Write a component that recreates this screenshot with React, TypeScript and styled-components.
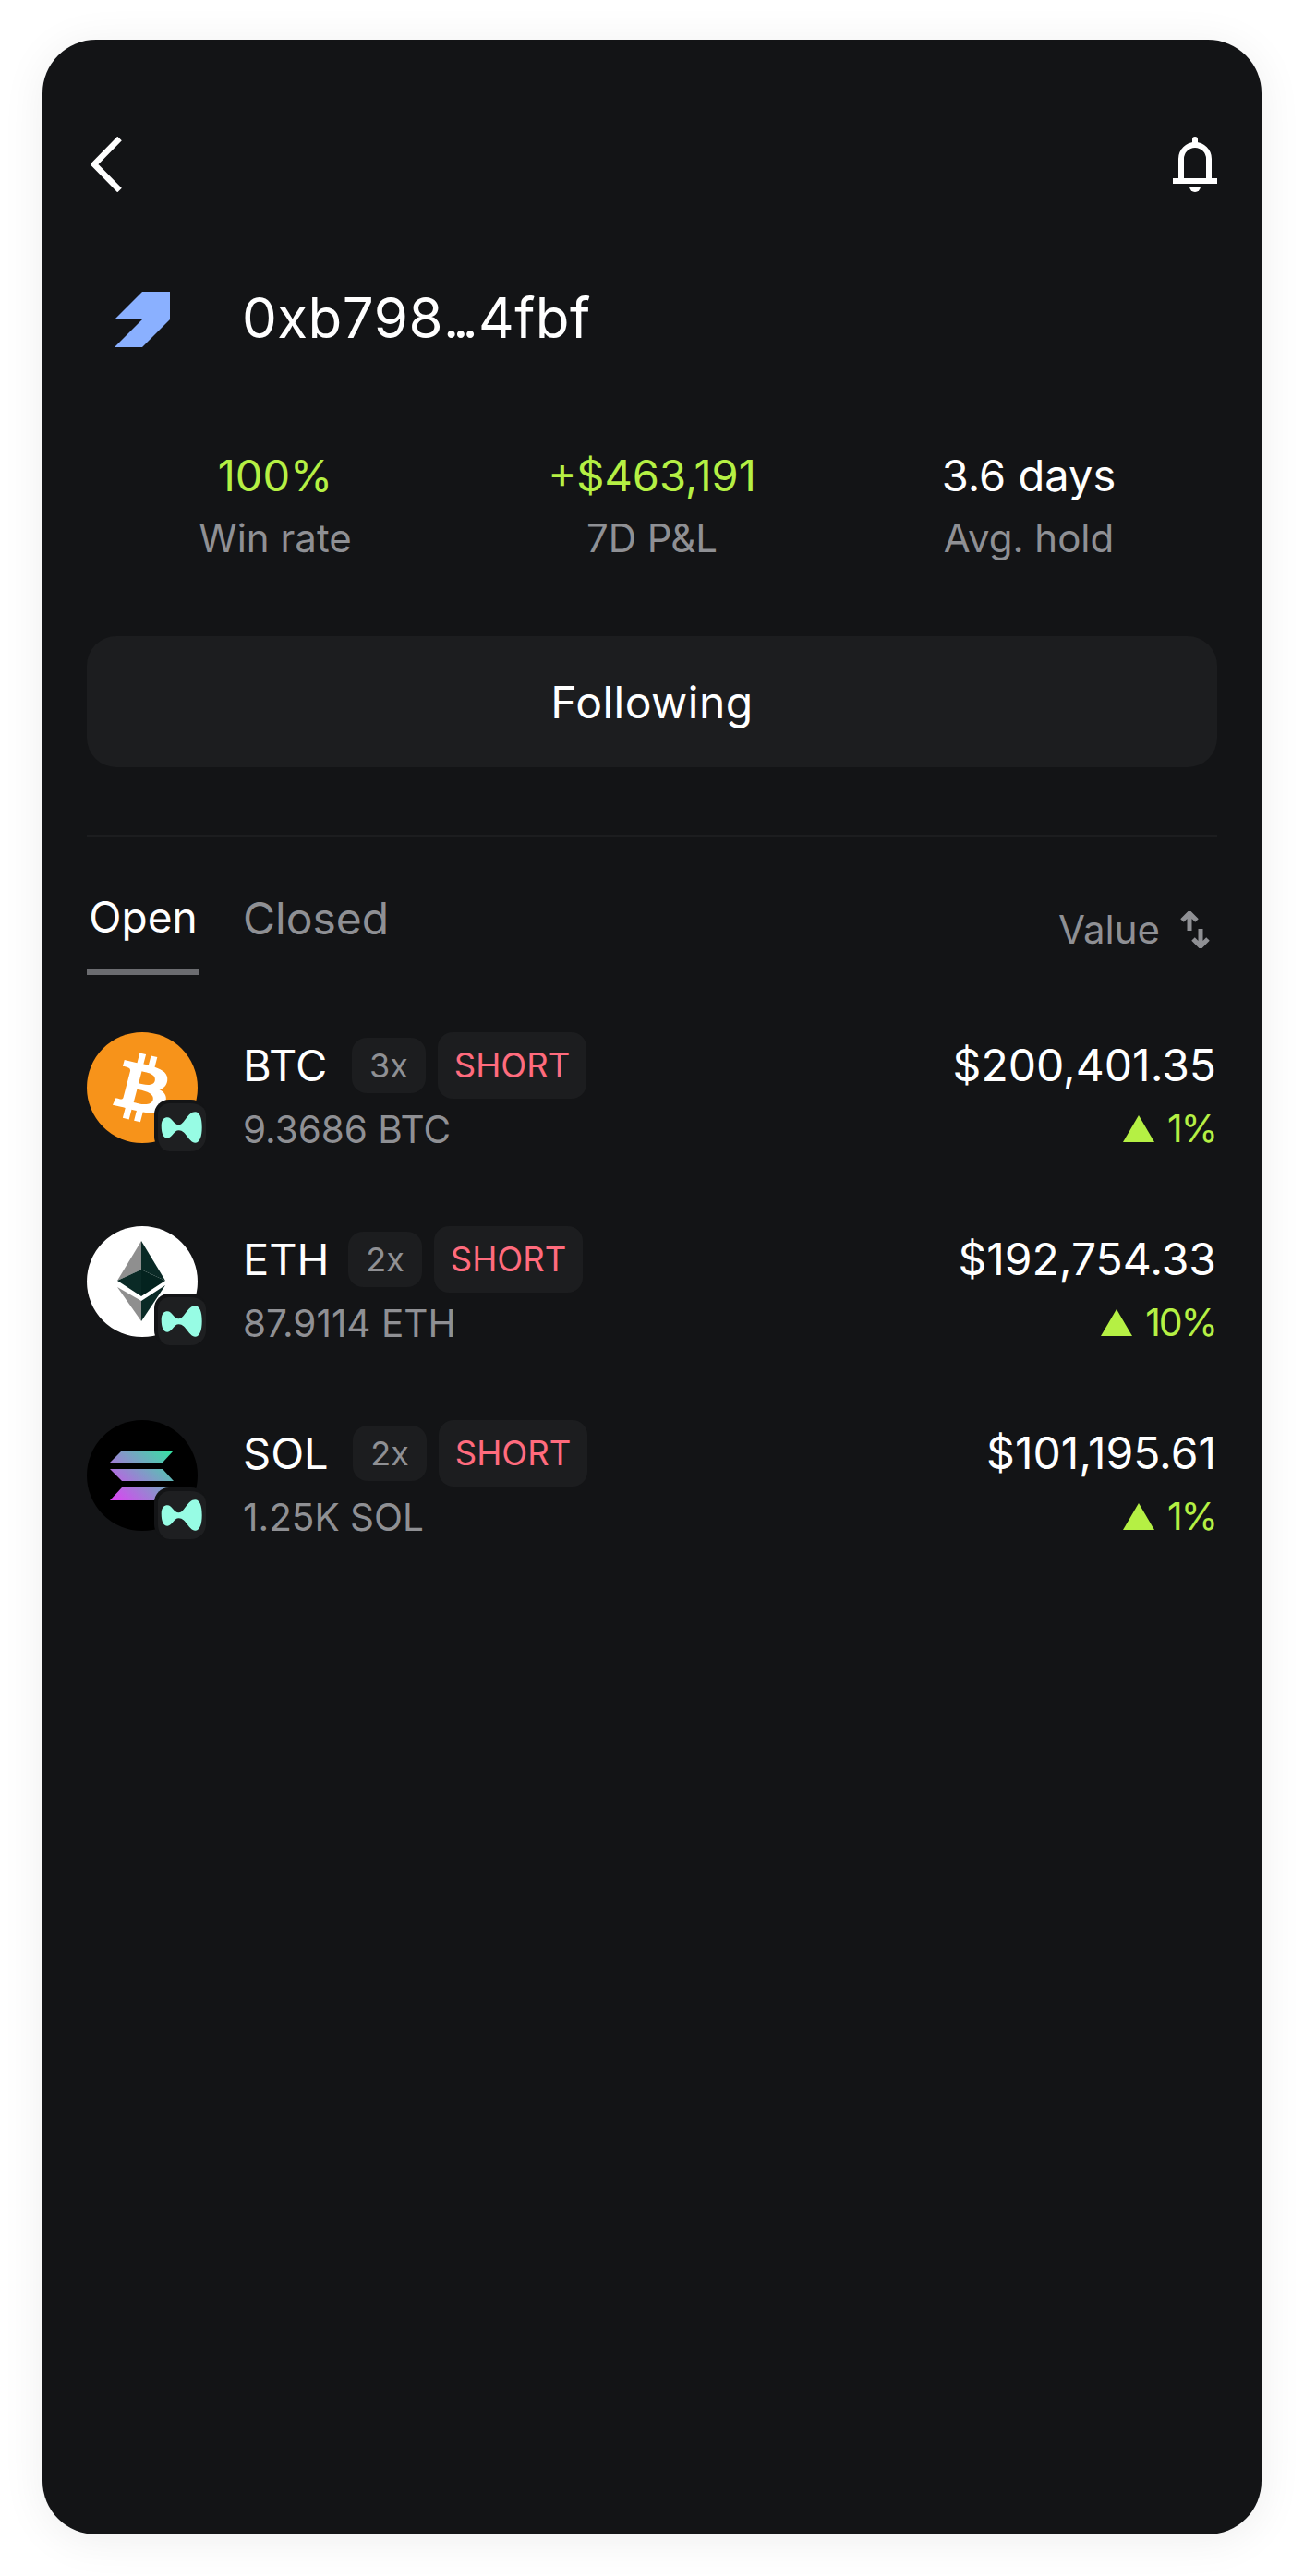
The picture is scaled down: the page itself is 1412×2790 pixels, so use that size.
import React from "react";
import styled, { createGlobalStyle } from "styled-components";

const GlobalStyle = createGlobalStyle`
  html, body {
    margin: 0;
    padding: 0;
    background: #ffffff;
  }
  * {
    box-sizing: border-box;
  }
`;

const Page = styled.div`
  padding: 43px 46px 45px;
  font-family: "Inter", "Liberation Sans", sans-serif;
`;

const Card = styled.div`
  height: 2702px;
  padding: 105px 48px 0;
  background: #131416;
  border-radius: 58px;
  box-shadow: 0 6px 48px rgba(0, 0, 0, 0.07);
  color: #ffffff;
`;

const Header = styled.div`
  display: flex;
  justify-content: space-between;
  align-items: flex-start;
  height: 60px;
  padding-left: 4px;
`;

const Identity = styled.div`
  display: flex;
  align-items: center;
  gap: 48px;
  margin-top: 108px;
  height: 60px;
`;

const LogoBox = styled.div`
  display: flex;
  justify-content: center;
  width: 120px;
`;

const Address = styled.div`
  margin-top: -4px;
  font-size: 60px;
  line-height: 60px;
  font-weight: 400;
  letter-spacing: 0.5px;
`;

const Dots = styled.span`
  letter-spacing: -7px;
  margin-right: 7px;
`;

const Stats = styled.div`
  display: grid;
  grid-template-columns: repeat(3, 1fr);
  margin-top: 111px;
`;

const Stat = styled.div`
  display: flex;
  flex-direction: column;
  align-items: center;
  gap: 12px;
`;

const StatValue = styled.div<{ $green?: boolean }>`
  font-size: 47px;
  line-height: 56px;
  color: ${(p) => (p.$green ? "#b5f044" : "#ffffff")};
`;

const StatLabel = styled.div`
  font-size: 42px;
  line-height: 56px;
  color: #8f9094;
`;

const FollowButton = styled.button`
  display: block;
  width: 100%;
  height: 142px;
  margin-top: 78px;
  border: 0;
  border-radius: 32px;
  background: #1c1d1f;
  color: #ffffff;
  font: inherit;
  font-size: 48px;
  letter-spacing: 0.5px;
`;

const Divider = styled.div`
  height: 2px;
  margin-top: 73px;
  background: #1c1d1f;
`;

const TabBar = styled.div`
  display: flex;
  align-items: flex-start;
  margin-top: 56px;
`;

const Tab = styled.div<{ $active?: boolean }>`
  height: 94px;
  margin-right: 47px;
  padding: ${(p) => (p.$active ? "0" : "2px")} 0 0;
  font-size: ${(p) => (p.$active ? "46px" : "48px")};
  line-height: 62px;
  min-width: ${(p) => (p.$active ? "122px" : "0")};
  text-align: center;
  color: ${(p) => (p.$active ? "#ffffff" : "#8f9094")};
  border-bottom: 6px solid ${(p) => (p.$active ? "#6b6c70" : "transparent")};
`;

const Sort = styled.div`
  display: flex;
  align-items: center;
  gap: 22px;
  margin-left: auto;
  margin-top: 25px;
  padding-right: 8px;
  font-size: 42px;
  line-height: 40px;
  color: #8f9094;
`;

const Rows = styled.div`
  display: flex;
  flex-direction: column;
  gap: 90px;
  margin-top: 62px;
`;

const Row = styled.div`
  display: flex;
  height: 120px;
`;

const Avatar = styled.div`
  position: relative;
  flex: none;
  width: 120px;
  height: 120px;
  margin-right: 49px;
`;

const Badge = styled.div`
  position: absolute;
  left: 73px;
  top: 73px;
  width: 56px;
  height: 56px;
  border: 4px solid #131416;
  border-right: 0;
  border-bottom: 0;
  border-radius: 16px;
  background: #1e1f21;
  overflow: hidden;
`;

const Info = styled.div`
  display: flex;
  flex-direction: column;
  gap: 10px;
`;

const TitleLine = styled.div`
  display: flex;
  align-items: center;
  height: 72px;
`;

const Symbol = styled.div<{ $width: number }>`
  width: ${(p) => p.$width}px;
  font-size: 47px;
  line-height: 72px;
`;

const Pill = styled.div`
  display: flex;
  align-items: center;
  justify-content: center;
  border-radius: 16px;
  background: #1c1d1f;
`;

const Leverage = styled(Pill)`
  width: 80px;
  height: 60px;
  margin-right: 13px;
  font-size: 36px;
  color: #8f9094;
`;

const Side = styled(Pill)`
  width: 161px;
  height: 72px;
  font-size: 36.5px;
  color: #ff6b7d;
`;

const Amount = styled.div`
  font-size: 40.5px;
  line-height: 48px;
  color: #8f9094;
`;

const Figures = styled.div`
  display: flex;
  flex-direction: column;
  align-items: flex-end;
  margin-left: auto;
  gap: 8px;
  padding-right: 1px;
`;

const Worth = styled.div`
  font-size: 48px;
  line-height: 72px;
`;

const Change = styled.div`
  display: flex;
  align-items: center;
  gap: 14px;
  font-size: 41px;
  line-height: 48px;
  letter-spacing: -2px;
  color: #b5f044;
`;

const Triangle = styled.div`
  width: 0;
  height: 0;
  border-left: 17px solid transparent;
  border-right: 17px solid transparent;
  border-bottom: 29px solid #b5f044;
`;

const BackIcon = () => (
  <svg width="34" height="60" viewBox="0 0 34 60" fill="none">
    <path d="M31.5 2 4 30l27.5 28" stroke="#fff" strokeWidth="6.5" />
  </svg>
);

const BellIcon = () => (
  <svg width="48" height="60" viewBox="0 0 48 60" fill="#fff">
    <path d="M9 46V24a15 15 0 0 1 30 0v22" fill="none" stroke="#fff" strokeWidth="6" />
    <rect x="0" y="45" width="48" height="6" />
    <rect x="21" y="0" width="6" height="10" rx="3" />
    <path d="M18 54h12a6 6 0 0 1-12 0z" />
  </svg>
);

const LogoIcon = () => (
  <svg width="60" height="60" viewBox="0 0 60 60">
    <polygon points="30,0 60,0 60,30 30,60 0,60 30,30 0,30" fill="#8ab0ff" />
  </svg>
);

const SortIcon = () => (
  <svg width="32" height="40" viewBox="0 0 32 40" fill="none" stroke="#8f9094" strokeWidth="5">
    <path d="M10 21V3M2 10l8-8 8 8" />
    <path d="M22 19v18M14 30l8 8 8-8" />
  </svg>
);

const BtcIcon = () => (
  <svg width="120" height="120" viewBox="0 0 32 32">
    <circle cx="16" cy="16" r="16" fill="#f7931a" />
    <path
      fill="#fff"
      transform="matrix(1.05 0 0 1 -1.1 0)"
      d="M23.189 14.02c.314-2.096-1.283-3.223-3.465-3.975l.708-2.84-1.728-.43-.69 2.765c-.454-.114-.92-.22-1.385-.326l.695-2.783L15.596 6l-.708 2.839c-.376-.086-.746-.17-1.104-.26l.002-.009-2.384-.595-.46 1.846s1.283.294 1.256.312c.7.175.826.638.805 1.006l-.806 3.235c.048.012.11.03.18.057l-.183-.045-1.13 4.532c-.086.212-.303.531-.793.41.018.025-1.256-.313-1.256-.313l-.858 1.978 2.25.561c.418.105.828.215 1.231.318l-.715 2.872 1.727.43.708-2.84c.472.127.93.245 1.378.357l-.706 2.828 1.728.43.715-2.866c2.948.558 5.164.333 6.097-2.333.752-2.146-.037-3.385-1.588-4.192 1.13-.26 1.98-1.003 2.207-2.538zm-3.95 5.538c-.533 2.147-4.148.986-5.32.695l.95-3.805c1.172.293 4.929.872 4.37 3.11zm.535-5.569c-.487 1.953-3.495.96-4.47.717l.86-3.45c.975.243 4.118.696 3.61 2.733z"
    />
  </svg>
);

const EthIcon = () => (
  <svg width="120" height="120" viewBox="0 0 120 120">
    <circle cx="60" cy="60" r="60" fill="#fff" />
    <polygon points="59,16 33,59 59,47" fill="#8f8f8f" />
    <polygon points="59,16 85,59 59,47" fill="#0a2a26" />
    <polygon points="33,59 59,47 59,76" fill="#0a2a26" />
    <polygon points="85,59 59,47 59,76" fill="#04231f" />
    <polygon points="33,66 59,81 59,103" fill="#8f8f8f" />
    <polygon points="85,64 59,81 59,103" fill="#0a2a26" />
  </svg>
);

const SolIcon = () => (
  <svg width="120" height="120" viewBox="0 0 120 120">
    <defs>
      <linearGradient id="sol" gradientUnits="userSpaceOnUse" x1="30" y1="92" x2="90" y2="28">
        <stop offset="0" stopColor="#e040f5" />
        <stop offset="1" stopColor="#2fe8a0" />
      </linearGradient>
    </defs>
    <circle cx="60" cy="60" r="60" fill="#000" />
    <polygon points="38,33 94,33 82,46 25,46" fill="url(#sol)" />
    <polygon points="25,53 82,53 94,66 38,66" fill="url(#sol)" />
    <polygon points="38,73 94,73 82,87 25,87" fill="url(#sol)" />
  </svg>
);

const VenueGlyph = styled.svg`
  display: block;
  margin: -4px 0 0 -4px;
`;

const VenueIcon = () => (
  <VenueGlyph width="56" height="56" viewBox="0 0 56 56">
    <path
      fill="#97fce4"
      d="M7.7 28.3C7.7 21.7 11 19.3 14.3 19.3 19.3 19.3 21 27.3 26.7 27.3 32.7 27.3 36 13.3 44.3 13.3 49.3 13.3 51.7 20 51.7 30 51.7 40 49.3 46.7 44.3 46.7 37.7 46.7 34.3 33.3 26.7 33.3 21 33.3 19.3 41.7 14.3 41.7 10 41.7 7.7 36.7 7.7 28.3Z"
    />
  </VenueGlyph>
);

type Position = {
  symbol: string;
  symbolWidth: number;
  icon: React.ReactNode;
  leverage: string;
  amount: string;
  worth: string;
  change: string;
};

const positions: Position[] = [
  { symbol: "BTC", symbolWidth: 118, icon: <BtcIcon />, leverage: "3x", amount: "9.3686 BTC", worth: "$200,401.35", change: "1%" },
  { symbol: "ETH", symbolWidth: 114, icon: <EthIcon />, leverage: "2x", amount: "87.9114 ETH", worth: "$192,754.33", change: "10%" },
  { symbol: "SOL", symbolWidth: 119, icon: <SolIcon />, leverage: "2x", amount: "1.25K SOL", worth: "$101,195.61", change: "1%" },
];

export default function App() {
  return (
    <Page>
      <GlobalStyle />
      <Card>
        <Header>
          <BackIcon />
          <BellIcon />
        </Header>
        <Identity>
          <LogoBox>
            <LogoIcon />
          </LogoBox>
          <Address>
            0xb798<Dots>...</Dots>4fbf
          </Address>
        </Identity>
        <Stats>
          <Stat>
            <StatValue $green>100%</StatValue>
            <StatLabel>Win rate</StatLabel>
          </Stat>
          <Stat>
            <StatValue $green>+$463,191</StatValue>
            <StatLabel>7D P&amp;L</StatLabel>
          </Stat>
          <Stat>
            <StatValue>3.6 days</StatValue>
            <StatLabel>Avg. hold</StatLabel>
          </Stat>
        </Stats>
        <FollowButton>Following</FollowButton>
        <Divider />
        <TabBar>
          <Tab $active>Open</Tab>
          <Tab>Closed</Tab>
          <Sort>
            Value
            <SortIcon />
          </Sort>
        </TabBar>
        <Rows>
          {positions.map((p) => (
            <Row key={p.symbol}>
              <Avatar>
                {p.icon}
                <Badge>
                  <VenueIcon />
                </Badge>
              </Avatar>
              <Info>
                <TitleLine>
                  <Symbol $width={p.symbolWidth}>{p.symbol}</Symbol>
                  <Leverage>{p.leverage}</Leverage>
                  <Side>SHORT</Side>
                </TitleLine>
                <Amount>{p.amount}</Amount>
              </Info>
              <Figures>
                <Worth>{p.worth}</Worth>
                <Change>
                  <Triangle />
                  {p.change}
                </Change>
              </Figures>
            </Row>
          ))}
        </Rows>
      </Card>
    </Page>
  );
}
